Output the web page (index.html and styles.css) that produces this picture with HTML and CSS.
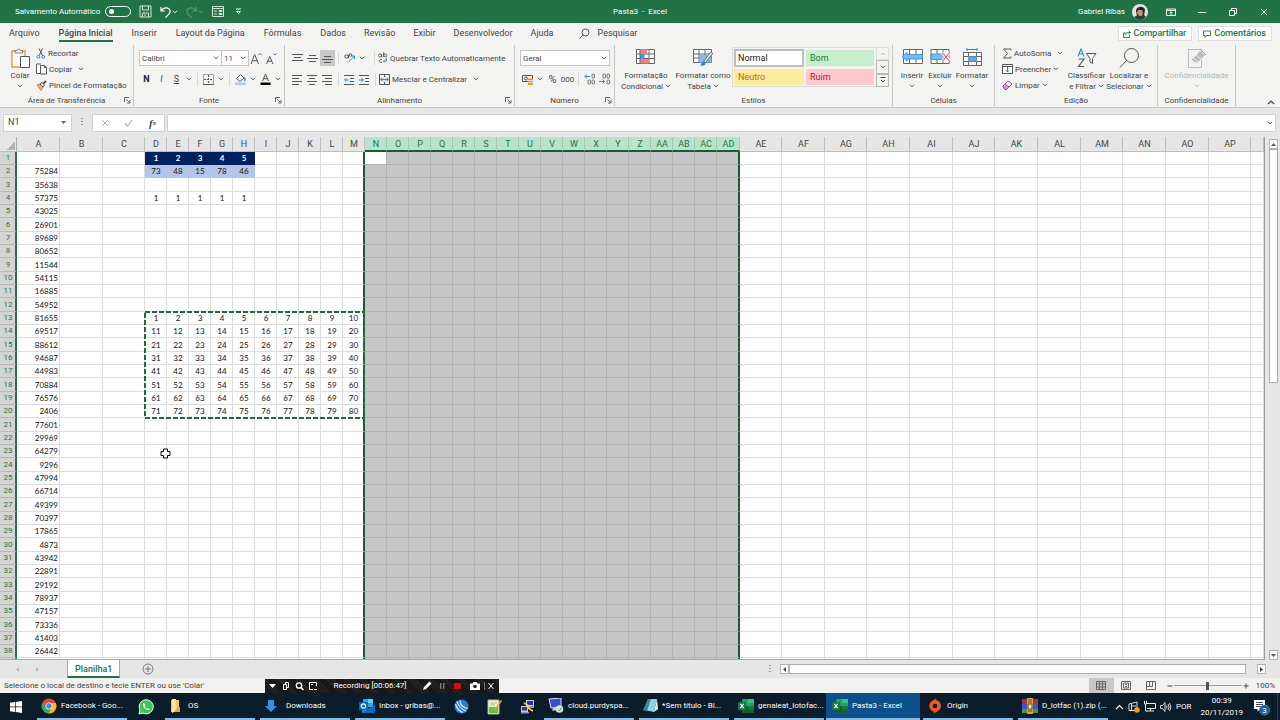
FILE: index.html
```html
<!DOCTYPE html>
<html lang="pt-BR">
<head>
<meta charset="utf-8">
<title>Pasta3 - Excel</title>
<link rel="stylesheet" href="styles.css">
</head>
<body>
<svg class="defs" aria-hidden="true">
  <symbol id="chev" viewBox="0 0 6 4"><path d="M1 .8l2 2 2-2" fill="none" stroke="currentColor" stroke-width="1"/></symbol>
  <symbol id="launch" viewBox="0 0 7 7"><path d="M.5 5V.5H5M2.500 2.500l3 3M6 3v3H3" fill="none" stroke="#555" stroke-width=".9"/></symbol>
  <symbol id="excel" viewBox="0 0 16 14"><rect x="4" y="0" width="12" height="14" rx="1" fill="#21a366"/><path d="M10 0h5a1 1 0 0 1 1 1v3h-6z" fill="#33c481"/><path d="M4 7h12v6a1 1 0 0 1-1 1H5a1 1 0 0 1-1-1z" fill="#185c37"/><path d="M10 7h6v3.500h-6z" fill="#107c41"/><rect y="3" width="8" height="8" rx=".7" fill="#107c41"/><path d="M2.300 4.800l3.400 4.400M5.700 4.800L2.300 9.200" stroke="#fff" stroke-width="1.200"/></symbol>
</svg>

<header class="titlebar">
  <div class="quick">
    <label class="autosave">Salvamento Automático <input type="checkbox" class="switch"></label>
    <button class="qb" aria-label="Salvar"><svg width="13" height="13" viewBox="0 0 13 13" fill="none" stroke="#d5e8dc"><path d="M1 1h11v11H1zM3.500 1v4h6V1M3.500 12V8h6v4M5 10h2"/></svg></button>
    <button class="qb" aria-label="Desfazer"><svg width="11" height="12" viewBox="0 0 11 12" fill="none" stroke="#fff" stroke-width="1.200"><path d="M1 1v4h4M1.300 4.700C3.500 1.500 7 1 9 3s1 4-.5 5.500L5.500 11.500"/></svg><svg width="6" height="4"><use href="#chev"/></svg></button>
    <button class="qb faded" aria-label="Refazer"><svg width="11" height="12" viewBox="0 0 11 12" fill="none" stroke="#fff" stroke-width="1.200"><path d="M10 1v4H6M9.700 4.700C7.500 1.500 4 1 2 3s-1 4 .5 5.500l3 3"/></svg><svg width="6" height="4"><use href="#chev"/></svg></button>
    <button class="qb" aria-label="Formulário"><svg width="12" height="11" viewBox="0 0 12 11" fill="none" stroke="#d5e8dc"><path d="M.5.5h11v10H.5zM.5 2.500h11M2 5h3M2 8h3M7 4.500h3v1H7zM7 7.500h3v1H7z"/></svg></button>
    <button class="qb more" aria-label="Personalizar"><svg width="7" height="7" viewBox="0 0 7 7"><path d="M1 1h5M1.500 3.500l2 2 2-2z" fill="none" stroke="#fff"/></svg></button>
  </div>
  <h1 class="doc">Pasta3 &nbsp;-&nbsp; Excel</h1>
  <div class="account">
    <span>Gabriel Ribas</span>
    <svg width="16" height="16" viewBox="0 0 16 16"><circle cx="8" cy="8" r="8" fill="#dfe5e2"/><path d="M4 7c0-5 8-6 9-1l-1 6-3 3-4-3z" fill="#2d2523"/><path d="M6 6h4l1 3-1 3H7L5 9z" fill="#c98f78"/><path d="M2 13l4-2 3 2 3-2 2 2c-3 4-9 4-12 0z" fill="#343c40"/></svg>
    <button class="wb" aria-label="Opções da faixa"><svg width="10" height="8" viewBox="0 0 10 8" fill="none" stroke="#fff" stroke-width=".9"><path d="M.5 1h9v6.500h-9zM.5 2.500h9M5 7V4M3.500 5.200L5 3.800l1.500 1.400"/></svg></button>
    <button class="wb" aria-label="Minimizar"><svg width="8" height="8"><path d="M0 4.500h8" stroke="#fff"/></svg></button>
    <button class="wb" aria-label="Restaurar"><svg width="8" height="8" viewBox="0 0 8 8" fill="none" stroke="#fff"><path d="M.5 2.500h5v5h-5zM2.500 2V.5h5v5H6"/></svg></button>
    <button class="wb" aria-label="Fechar"><svg width="8" height="8"><path d="M1 1l6 6M7 1L1 7" stroke="#fff"/></svg></button>
  </div>
</header>

<nav class="tabs">
  <a href="#">Arquivo</a><a href="#" class="current">Página Inicial</a><a href="#">Inserir</a><a href="#">Layout da Página</a><a href="#">Fórmulas</a><a href="#">Dados</a><a href="#">Revisão</a><a href="#">Exibir</a><a href="#">Desenvolvedor</a><a href="#">Ajuda</a>
  <button class="search"><svg width="11" height="11" viewBox="0 0 11 11" fill="none" stroke="#555"><circle cx="6.500" cy="4.500" r="3.500"/><path d="M4 7L.5 10.500"/></svg>Pesquisar</button>
  <button class="share"><svg width="8" height="8" viewBox="0 0 8 8" fill="none" stroke="#217346" stroke-width=".9"><path d="M3 3H.5v4.500h6V5M2.500 5c0-2 1.500-2.500 4.500-2.500M5.500.8l2 1.700-2 1.700"/></svg>Compartilhar</button>
  <button class="share"><svg width="8" height="8" viewBox="0 0 8 8" fill="none" stroke="#217346" stroke-width=".9"><path d="M.5 1h7v4.500H3.500L2 7.500v-2H.5z"/></svg>Comentários</button>
</nav>

<section class="ribbon">
  <div class="group g-clip">
    <div class="body">
      <button class="big paste"><svg width="19" height="20" viewBox="0 0 19 20"><path d="M1 3h13v16H1z" fill="#fff" stroke="#e8972f" stroke-width="1.400"/><path d="M4 5V2.500h2a1.800 1.800 0 0 1 3.500 0h2V5z" fill="#f3f3f1" stroke="#666" stroke-width=".8"/><path d="M9.500 8.500h9v11h-9z" fill="#fff" stroke="#555"/></svg><span>Colar</span><svg width="6" height="4"><use href="#chev"/></svg></button>
      <div class="stack">
        <button><svg width="10" height="11" viewBox="0 0 10 11" fill="none"><path d="M3 .5l3.500 7M6.500.5L3.200 7.500" stroke="#555"/><circle cx="2.300" cy="8.800" r="1.400" stroke="#2b88d8"/><circle cx="7.200" cy="8.800" r="1.400" stroke="#2b88d8"/></svg>Recortar</button>
        <button><svg width="11" height="12" viewBox="0 0 11 12" fill="#fff" stroke="#555"><path d="M4 10.500H.5V1H5"/><path d="M4.500 2.500h4l2 2v6.500h-6zM8.500 2.500v2h2"/></svg>Copiar <svg class="far" width="6" height="4"><use href="#chev"/></svg></button>
        <button><svg width="11" height="11" viewBox="0 0 11 11"><path d="M1 5l3-1 3 3-2 3.500z" fill="#f0b35a" stroke="#d98324"/><path d="M4 4l2-1.500L8.500 5 7 7z" fill="#fff" stroke="#555"/><path d="M7 4l3-3" stroke="#555" stroke-width="1.800"/></svg>Pincel de Formatação</button>
      </div>
    </div>
    <footer>Área de Transferência<svg width="7" height="7"><use href="#launch"/></svg></footer>
  </div>

  <div class="group g-font">
    <div class="body rows">
      <div class="row">
        <label class="combo c-font"><select aria-label="Fonte"><option>Calibri</option></select><svg width="6" height="4"><use href="#chev"/></svg></label>
        <label class="combo c-size"><select aria-label="Tamanho"><option>11</option></select><svg width="6" height="4"><use href="#chev"/></svg></label>
        <button class="ib" aria-label="Aumentar fonte"><svg width="13" height="13" viewBox="0 0 13 13" fill="none"><path d="M1 12L4.700 2.500 8.500 12M2.300 8.700h5" stroke="#555"/><path d="M8.500 3.200l1.700-2 1.700 2" stroke="#2b88d8"/></svg></button>
        <button class="ib" aria-label="Diminuir fonte"><svg width="13" height="13" viewBox="0 0 13 13" fill="none"><path d="M1.500 12l3.200-7.500L8 12M2.700 9.300h4" stroke="#555"/><path d="M8.500 1.500l1.500 1.700 1.500-1.700" stroke="#2b88d8"/></svg></button>
      </div>
      <div class="row marks">
        <button class="ib"><b>N</b></button><button class="ib"><i>I</i></button><button class="ib"><u>S</u></button><svg class="cv" width="6" height="4"><use href="#chev"/></svg><i class="vr"></i>
        <button class="ib" aria-label="Bordas"><svg width="11" height="11" viewBox="0 0 11 11" fill="none" stroke="#555"><path d="M.5.5h10v10H.5z" stroke-dasharray="1 1"/><path d="M5.500 1v9M1 5.500h9" stroke-dasharray="2 1"/><path d="M0 10.500h11"/></svg></button><svg class="cv" width="6" height="4"><use href="#chev"/></svg><i class="vr"></i>
        <button class="ib" aria-label="Cor de preenchimento"><svg width="11" height="12" viewBox="0 0 11 12"><path d="M1.500 5.500l4-4 3.500 3.500-4 3.500z" fill="#fff" stroke="#555"/><path d="M8.500 4c2 1 1.500 3 1 4" stroke="#2b88d8" stroke-width="1.300" fill="none"/><path d="M0 9.500h11V12H0z" fill="#b4c6e7"/></svg></button><svg class="cv" width="6" height="4"><use href="#chev"/></svg>
        <button class="ib" aria-label="Cor da fonte"><svg width="11" height="12" viewBox="0 0 11 12"><path d="M2.500 8l3-7 3 7M3.500 5.700h4" fill="none" stroke="#555"/><path d="M.5 9.500h10V12H.5z" fill="#000"/></svg></button><svg class="cv" width="6" height="4"><use href="#chev"/></svg>
      </div>
    </div>
    <footer>Fonte<svg width="7" height="7"><use href="#launch"/></svg></footer>
  </div>

  <div class="group g-align">
    <div class="body rows">
      <div class="row">
        <button class="ib" aria-label="Em cima"><svg width="11" height="11" stroke="#555"><path d="M0 1.500h11M2 4.500h7M0 7.500h11"/></svg></button>
        <button class="ib" aria-label="No meio"><svg width="11" height="11" stroke="#555"><path d="M2 2.500h7M0 5.500h11M2 8.500h7"/></svg></button>
        <button class="ib on" aria-label="Embaixo"><svg width="11" height="11" stroke="#555"><path d="M2 3.500h7M0 6.500h11M2 9.500h7"/></svg></button><i class="vr"></i>
        <button class="ib" aria-label="Orientação"><svg width="12" height="12" viewBox="0 0 12 12" fill="none"><circle cx="2.500" cy="4.500" r="1.700" stroke="#555"/><path d="M4.500 3v3" stroke="#555"/><circle cx="6.500" cy="3" r="1.300" stroke="#555"/><path d="M4 10.500l6.500-6.500M7.500 4h3v3" stroke="#2b88d8"/></svg></button><svg class="cv" width="6" height="4"><use href="#chev"/></svg><i class="vr wide"></i>
        <button class="tb"><svg width="10" height="12" viewBox="0 0 10 12" fill="none" stroke="#555" stroke-width=".9"><circle cx="2" cy="3.500" r="1.500"/><path d="M3.700 2v3.300M5.700 0v5"/><circle cx="7.300" cy="3.500" r="1.500"/><path d="M4 7.500c-3-1-4 3.500 0 2.800"/><path d="M8.500 6v3h-3M7 7.500L5.500 9 7 10.500" stroke="#2b88d8"/></svg>Quebrar Texto Automaticamente</button>
      </div>
      <div class="row">
        <button class="ib" aria-label="Esquerda"><svg width="11" height="11" stroke="#555"><path d="M0 1.500h10M0 4.500h7M0 7.500h10M0 10.500h7"/></svg></button>
        <button class="ib" aria-label="Centro"><svg width="11" height="11" stroke="#555"><path d="M0 1.500h10M2 4.500h6M0 7.500h10M2 10.500h6"/></svg></button>
        <button class="ib" aria-label="Direita"><svg width="11" height="11" stroke="#555"><path d="M0 1.500h10M3 4.500h7M0 7.500h10M3 10.500h7"/></svg></button><i class="vr"></i>
        <button class="ib" aria-label="Diminuir recuo"><svg width="11" height="11" fill="none" stroke="#555"><path d="M0 1.500h10M6 4.500h4M6 7.500h4M0 10.500h10"/><path d="M5 6H.8M2.500 4.200L.7 6l1.800 1.800" stroke="#2b88d8"/></svg></button>
        <button class="ib" aria-label="Aumentar recuo"><svg width="11" height="11" fill="none" stroke="#555"><path d="M0 1.500h10M6 4.500h4M6 7.500h4M0 10.500h10"/><path d="M0 6h4.500M2.700 4.200L4.500 6 2.700 7.800" stroke="#2b88d8"/></svg></button><i class="vr"></i>
        <button class="tb"><svg width="11" height="11" viewBox="0 0 11 11" fill="none" stroke="#555"><path d="M.5.5h10v10H.5zM5.500.5v3M5.500 7.500v3"/><path d="M1 3h9v5H1z" fill="#cfe6f7" stroke="none"/><path d="M1.500 5.500h8M3.200 4L1.700 5.500 3.200 7M7.800 4l1.500 1.500L7.800 7" stroke="#2b88d8"/></svg>Mesclar e Centralizar <svg class="far" width="6" height="4"><use href="#chev"/></svg></button>
      </div>
    </div>
    <footer>Alinhamento<svg width="7" height="7"><use href="#launch"/></svg></footer>
  </div>

  <div class="group g-num">
    <div class="body rows">
      <div class="row"><label class="combo c-num"><select aria-label="Formato"><option>Geral</option></select><svg width="6" height="4"><use href="#chev"/></svg></label></div>
      <div class="row">
        <button class="ib" aria-label="Moeda"><svg width="12" height="11" viewBox="0 0 12 11"><path d="M.5 1.500h10v6H.5z" fill="none" stroke="#555"/><circle cx="4" cy="4.500" r="1.500" fill="none" stroke="#555"/><path d="M6 4.500h5V11H6z" fill="#ee8f2c"/><path d="M6 6.500h5M6 8.500h5" stroke="#fff" stroke-width=".7"/></svg></button><svg class="cv" width="6" height="4"><use href="#chev"/></svg>
        <button class="ib pct">%</button><button class="ib mil">000</button><i class="vr"></i>
        <button class="ib dec" aria-label="Aumentar casas"><svg width="12" height="12" fill="none"><path d="M1 3.500h5M3 1.500L1 3.500l2 2" stroke="#2b88d8"/><g stroke="#666" stroke-width=".9"><rect x="8" y="1" width="2.500" height="4" rx="1"/><rect x="4" y="7" width="2.500" height="4" rx="1"/><rect x="8" y="7" width="2.500" height="4" rx="1"/></g></svg></button>
        <button class="ib dec" aria-label="Diminuir casas"><svg width="12" height="12" fill="none"><path d="M0 8.500h5.500M3.500 6.500l2 2-2 2" stroke="#2b88d8"/><g stroke="#666" stroke-width=".9"><rect x="4" y="1" width="2.500" height="4" rx="1"/><rect x="8" y="1" width="2.500" height="4" rx="1"/><rect x="8" y="7" width="2.500" height="4" rx="1"/></g></svg></button>
      </div>
    </div>
    <footer>Número<svg width="7" height="7"><use href="#launch"/></svg></footer>
  </div>

  <div class="group g-style">
    <div class="body">
      <button class="big w-cond"><svg width="20" height="18" viewBox="0 0 20 18"><path d="M.5 1.500h18v14H.5zM.5 6h18M.5 10.500h18M13 1.500v14" fill="#fff" stroke="#666"/><path d="M4 1h7v5H4zM4 11h9v4.500H4z" fill="#f47b80"/><path d="M4 6h4.500v5H4z" fill="#3f9be0"/><path d="M4 1v15" stroke="#666"/></svg><span>Formatação<br>Condicional <svg width="6" height="4"><use href="#chev"/></svg></span></button>
      <button class="big w-table"><svg width="20" height="18" viewBox="0 0 20 18"><path d="M.5 1.500h18v13H.5zM.5 6h18M.5 10h18M6 1.500v13M12 1.500v13" fill="#fff" stroke="#666"/><path d="M6.500 6.500h12v8h-12z" fill="#79bdf0"/><path d="M19 4.500l-7.500 9.500" stroke="#666" stroke-width="3"/><path d="M18.600 5l-6.800 8.600" stroke="#fff" stroke-width="1.400"/><path d="M6 17.500c3 0 2-3 4-4s4 3 1 4z" fill="#2b88d8"/></svg><span>Formatar como<br>Tabela <svg width="6" height="4"><use href="#chev"/></svg></span></button>
      <div class="gallery">
        <button class="st normal">Normal</button><button class="st bom">Bom</button><button class="st neutro">Neutro</button><button class="st ruim">Ruim</button>
        <div class="gscroll"><button class="off" aria-label="Acima"><svg width="6" height="4" viewBox="0 0 6 4"><path d="M1 3l2-2 2 2" fill="none" stroke="currentColor"/></svg></button><button aria-label="Abaixo"><svg width="6" height="4"><use href="#chev"/></svg></button><button aria-label="Mais"><svg width="6" height="6" viewBox="0 0 6 6"><path d="M.5.5h5M1 3l2 2 2-2" fill="none" stroke="currentColor"/></svg></button></div>
      </div>
    </div>
    <footer>Estilos</footer>
  </div>

  <div class="group g-cells">
    <div class="body">
      <button class="big w-ins"><svg width="21" height="18" viewBox="0 0 21 18"><path d="M1.500 1.500h19v14h-19zM7.500 1.500v14M14 1.500v14" fill="#fff" stroke="#666"/><path d="M0 8.500l5-4v2h15.500v4.500H5v2z" fill="#79bdf0" stroke="#2b88d8" stroke-width=".8"/></svg><span>Inserir</span><svg width="6" height="4"><use href="#chev"/></svg></button>
      <button class="big w-del"><svg width="21" height="18" viewBox="0 0 21 18"><path d="M1 1.500h18v14H1zM7 1.500v14M13 1.500v14" fill="#fff" stroke="#666"/><path d="M1 6h11l3 3-3 2.500H1z" fill="#79bdf0" stroke="#2b88d8" stroke-width=".8"/><path d="M12.500 5l7 8M19.500 5l-7 8" stroke="#fff" stroke-width="3"/><path d="M12.500 5l7 8M19.500 5l-7 8" stroke="#e0474c" stroke-width="1.100"/></svg><span>Excluir</span><svg width="6" height="4"><use href="#chev"/></svg></button>
      <button class="big w-fmt"><svg width="21" height="20" viewBox="0 0 21 20"><path d="M1.500 4.500h18v13h-18zM1.500 8.500h18M1.500 13.500h18M6.500 4.500v13M14.500 4.500v13" fill="#fff" stroke="#666"/><path d="M6 8.500h9v5H6z" fill="#5aa9e6"/><path d="M5 1.500h10M5 0v3M15 0v3" stroke="#2b88d8"/></svg><span>Formatar</span><svg width="6" height="4"><use href="#chev"/></svg></button>
    </div>
    <footer>Células</footer>
  </div>

  <div class="group g-edit">
    <div class="body">
      <div class="stack">
        <button><svg width="10" height="11" viewBox="0 0 10 11"><path d="M9 2.500V1H1.500l4 4.500-4 4.500H9V8.500" fill="none" stroke="#555"/></svg>AutoSoma <svg class="far" width="6" height="4"><use href="#chev"/></svg></button>
        <button><svg width="11" height="10" viewBox="0 0 11 10"><path d="M.5.5h10v9H.5zM.5 2.500h10" fill="#fff" stroke="#555"/><path d="M5.500 3v5M3.500 6l2 2 2-2" fill="none" stroke="#2b88d8"/></svg>Preencher <svg width="6" height="4"><use href="#chev"/></svg></button>
        <button><svg width="11" height="10" viewBox="0 0 11 10"><path d="M1 6l5-5 4 3-5.500 5.500H3z" fill="#fff" stroke="#a349b5"/><path d="M1 6l2-2 4 3-2.500 2.500H3z" fill="#d59be0" stroke="#a349b5"/></svg>Limpar <svg width="6" height="4"><use href="#chev"/></svg></button>
      </div>
      <button class="big w-sort"><svg width="20" height="20" viewBox="0 0 20 20" fill="none"><path d="M1 8.500L4 1l3 7.500M2 6h4" stroke="#2b88d8" stroke-width="1.100"/><path d="M1.500 11h5.500L1.500 18.500H7" stroke="#555" stroke-width="1.100"/><path d="M9.500 5.500h9.500l-3.500 5v5l-2.500-1.500v-3.500z" fill="#fff" stroke="#555"/></svg><span>Classificar<br>e Filtrar <svg width="6" height="4"><use href="#chev"/></svg></span></button>
      <button class="big w-find"><svg width="20" height="20" viewBox="0 0 20 20" fill="none" stroke="#555"><circle cx="12.500" cy="7.500" r="7"/><path d="M7.500 12.500L1 19.500"/></svg><span>Localizar e<br>Selecionar <svg width="6" height="4"><use href="#chev"/></svg></span></button>
    </div>
    <footer>Edição</footer>
  </div>

  <div class="group g-conf">
    <div class="body">
      <button class="big dim" disabled><svg width="20" height="20" viewBox="0 0 20 20"><path d="M1.500 1.500h13v18h-13z" fill="none" stroke="#bbb"/><path d="M5 12l8-9 5 4-8 8z" fill="#bcbcbc"/><path d="M13 1l6 6M5 12l2-2M7 14l2-2" stroke="#999"/><path d="M6 10l6 5M9 7l6 5" stroke="#eee"/></svg><span>Confidencialidade</span><svg width="6" height="4"><use href="#chev"/></svg></button>
    </div>
    <footer>Confidencialidade</footer>
  </div>
  <button class="collapse" aria-label="Recolher"><svg width="8" height="5"><path d="M1 4l3-3 3 3" fill="none" stroke="#444" stroke-width="1.100"/></svg></button>
</section>

<div class="formula">
  <div class="namebox"><input value="N1" aria-label="Caixa de nome"><svg width="6" height="4"><path d="M0 0h5L2.500 3z" fill="#666"/></svg></div>
  <span class="grip"></span>
  <div class="fx">
    <button aria-label="Cancelar"><svg width="8" height="8"><path d="M1 1l6 6M7 1L1 7" stroke="#b5b5b5"/></svg></button>
    <button aria-label="Inserir"><svg width="9" height="8"><path d="M1 4.500L3.500 7 8 1" fill="none" stroke="#b5b5b5" stroke-width="1.200"/></svg></button>
    <button aria-label="Função" class="fn">f<small>x</small></button>
  </div>
  <div class="fbar"><input aria-label="Barra de fórmulas"><svg width="6" height="4"><use href="#chev"/></svg></div>
</div>

<main class="work">
  <div class="sheet">
    <table id="grid"></table>
    <svg class="cursor" width="11" height="11" viewBox="0 0 11 11"><path d="M3.500 1h4v2.500H10v4H7.500V10h-4V7.500H1v-4h2.500z" fill="#fff" stroke="#000"/></svg>
  </div>
  <div class="vscroll">
    <button aria-label="Acima"><svg width="5" height="3"><path d="M0 3h5L2.500 0z" fill="#555"/></svg></button>
    <div class="vthumb"></div>
    <button aria-label="Abaixo"><svg width="5" height="3"><path d="M0 0h5L2.500 3z" fill="#555"/></svg></button>
  </div>
</main>

<div class="strip">
  <button class="nav" aria-label="Anterior"><svg width="4" height="5"><path d="M3 0v5L0 2.500z" fill="#bbb"/></svg></button>
  <button class="nav" aria-label="Próxima"><svg width="4" height="5"><path d="M0 0v5l3-2.500z" fill="#bbb"/></svg></button>
  <button class="stab">Planilha1</button>
  <button class="add" aria-label="Nova planilha"><svg width="12" height="12" fill="none" stroke="#777"><circle cx="6" cy="6" r="5"/><path d="M3 6h6M6 3v6"/></svg></button>
  <span class="grip"></span>
  <div class="hscroll">
    <button aria-label="Esquerda"><svg width="3" height="5"><path d="M3 0v5L0 2.500z" fill="#444"/></svg></button>
    <div class="hthumb"></div>
    <button aria-label="Direita"><svg width="3" height="5"><path d="M0 0v5l3-2.500z" fill="#444"/></svg></button>
  </div>
</div>

<div class="status">
  <span class="msg">Selecione o local de destino e tecle ENTER ou use 'Colar'</span>
  <div class="recorder">
    <svg width="48" height="10" viewBox="0 0 48 10" fill="none" stroke="#fff"><path d="M0 3h7L3.500 7z" fill="#fff" stroke="none"/><path d="M14.500 3.500h3v5h-3zM16.500 3V1.500h3v5H18"/><circle cx="30" cy="4.500" r="2.700" stroke-width="1.300"/><path d="M32 6.500l2.500 2.500" stroke-width="1.500"/><path d="M44 8.500h-3.500v-7h7V5M42 3.500h2M45 8.500h3" /></svg>
    <span>Recording [00:06:47]</span>
    <svg width="72" height="10" viewBox="0 0 72 10"><path d="M0 9l1-3 5.500-5.500 2 2L3 8z" fill="#fff"/><path d="M17 2h1.500v6H17zM20 2h1.500v6H20z" fill="#777"/><path d="M31 2h7v6h-7z" fill="#d40d12"/><path d="M47 2.500h2.500L50.500 1h3l1 1.500H57V9H47z" fill="#fff"/><circle cx="52" cy="5.500" r="1.800" fill="#222"/><path d="M61.500 1v8" stroke="#777"/><path d="M65.500 2l5 6M70.500 2l-5 6" stroke="#fff"/></svg>
  </div>
  <div class="views">
    <button class="on" aria-label="Normal"><svg width="10" height="9" fill="none" stroke="#666"><path d="M.5.5h9v8h-9zM.5 3h9M.5 6h9M3.500.5v8M6.500.5v8"/></svg></button>
    <button aria-label="Layout"><svg width="10" height="9" fill="none" stroke="#666"><path d="M.5.5h9v8h-9zM2.500 2h5v5h-5zM4 3.500h2M4 5.500h2"/></svg></button>
    <button aria-label="Quebras"><svg width="10" height="9" fill="none" stroke="#666"><path d="M.5.5h9v8h-9zM3.500.5v5h3v-5M.5 5.500h3"/></svg></button>
  </div>
  <div class="zoom"><button aria-label="Menos"><svg width="6" height="6"><path d="M.5 3h5" stroke="#444"/></svg></button><input type="range" value="50" aria-label="Zoom"><button aria-label="Mais"><svg width="6" height="6"><path d="M.5 3h5M3 .5v5" stroke="#444"/></svg></button><span>100%</span></div>
</div>

<footer class="taskbar">
  <button class="ico start" aria-label="Iniciar"><svg width="12" height="12" fill="#fff"><path d="M0 1.700l5-.7v4.600H0zM5.700.9L12 0v5.600H5.700zM0 6.300h5V11l-5-.7zM5.700 6.300H12V12l-6.300-.9z"/></svg></button>
  <button class="task"><svg width="16" height="16" viewBox="0 0 16 16"><circle cx="8" cy="8" r="7.500" fill="#ea4335"/><path d="M1.500 4.300a7.500 7.500 0 0 0 6 11.200L11 9.500 5 9.700z" fill="#34a853"/><path d="M7.500 15.500a7.500 7.500 0 0 0 7.300-10.500H8l3 4.500z" fill="#fbbc05"/><circle cx="8" cy="8" r="3.500" fill="#fff"/><circle cx="8" cy="8" r="2.700" fill="#4285f4"/></svg>Facebook - Goo...</button>
  <button class="ico wa" aria-label="WhatsApp"><svg width="16" height="16" viewBox="0 0 16 16"><path d="M1 15l1-4A7 7 0 1 1 5 14z" fill="#3fc351" stroke="#fff"/><path d="M5.300 4.300c-1 1-.4 3 1.500 4.900s4 2.500 5 1.400l-1.700-1.500-1.100.7C8 9.300 7 8.300 6.500 7.200l.7-1-1-2z" fill="#fff"/></svg></button>
  <button class="task folder"><svg width="11" height="14" viewBox="0 0 11 14"><path d="M1 1h8v12H1z" fill="#f5c95a"/><path d="M2 0h4v12l-4 2z" fill="#ffe39a"/><path d="M8 8h2v5H4z" fill="#e2ae3d"/></svg>OS</button>
  <button class="task down"><svg width="12" height="14" viewBox="0 0 12 14"><path d="M3 1h6v6h3l-6 6-6-6h3z" fill="#3a8fe8"/></svg>Downloads</button>
  <button class="task"><svg width="16" height="14" viewBox="0 0 16 14"><path d="M4 0h10v8H4z" fill="#28a8ea"/><path d="M9 0h5v4H9z" fill="#50d9ff"/><path d="M3 6l6.500 4L16 6v8H3z" fill="#1490df"/><path d="M3 14L16 6v8z" fill="#0f6cbd"/><rect y="3" width="9" height="8" fill="#0364b8"/><circle cx="4.500" cy="7" r="2.200" fill="none" stroke="#fff" stroke-width="1.200"/></svg>Inbox - gribas@...</button>
  <button class="ico mid" aria-label="Navegação"><svg width="15" height="15" viewBox="0 0 15 15"><circle cx="7.500" cy="7.500" r="7" fill="#3179cd"/><path d="M3 2c1 5 4 8 9 10M6 1.500c0 4 3 7 7.500 8M1.500 5c1 4 4 7 7.500 8.500" stroke="#d4e9fb" fill="none" stroke-width="1.200"/></svg></button>
  <button class="ico mid" aria-label="Editor"><svg width="15" height="16" viewBox="0 0 15 16"><path d="M1 1h11v14H1z" fill="#f2f6d8" stroke="#a9b77c"/><path d="M2 8h9v6H2z" fill="#6abf3c"/><path d="M3 4h7M3 6h5" stroke="#aaa"/><path d="M14 1l-6 8-1 2 2-1 6-8z" fill="#e6a834"/></svg></button>
  <button class="ico mid" aria-label="Terminal"><svg width="15" height="15" viewBox="0 0 15 15"><path d="M6 1h8v6H6zM1 7h7v6H1z" fill="#c8cbd0"/><path d="M7 2h6v4H7zM2 8h5v3.500H2z" fill="#2635b8"/><path d="M9 7h5v2H9zM1 13h8v1.500H1z" fill="#999"/><path d="M4 4l5 3-1 2 5 3" stroke="#f1d62a" fill="none" stroke-width="1.600"/></svg></button>
  <button class="task"><svg width="16" height="15" viewBox="0 0 16 15"><path d="M1 1l12-1v9L3 10z" fill="#3550cf" stroke="#dce2f1"/><path d="M5 10l5-.5 1 3H4z" fill="#c9cfdd"/><circle cx="11.500" cy="11" r="3.800" fill="#dce7e0"/><path d="M10 11.500l1.500 1.500 2-3.500" stroke="#35a047" fill="none"/></svg>cloud.purdyspa...</button>
  <button class="task"><svg width="15" height="14" viewBox="0 0 15 14"><path d="M5 0h9l-3 13-10-2z" fill="#8fd2e6"/><path d="M5 0h3L4 12l-4-1z" fill="#43879b"/><path d="M11 13l3-13 1 10z" fill="#e6f4f7"/></svg>*Sem título - Bl...</button>
  <button class="task"><svg width="16" height="14"><use href="#excel"/></svg>genaleat_lotofac...</button>
  <button class="task active"><svg width="16" height="14"><use href="#excel"/></svg>Pasta3 - Excel</button>
  <button class="task origin"><svg width="14" height="16" viewBox="0 0 14 16"><path d="M9 0L7.500 2A6 6 0 0 1 10 13L5 16l1.500-2.200A6 6 0 0 1 4 3z" fill="#f05a22"/><circle cx="7" cy="8" r="5.500" fill="#f05a22"/><circle cx="7" cy="8" r="2.300" fill="#0b1c2a"/></svg>Origin</button>
  <button class="task"><svg width="16" height="16" viewBox="0 0 16 16"><path d="M0 1h16v5H0z" fill="#a8324a"/><path d="M0 6h16v5H0z" fill="#4a55b8"/><path d="M0 11h16v4H0z" fill="#3d9a48"/><path d="M5 0h6v16H5z" fill="#d7a039"/><path d="M6 6h4v5H6z" fill="#f4e4ba" stroke="#73501c"/><path d="M6 2h4M6 4h4M6 13h4" stroke="#73501c"/></svg>D_lotfac (1).zip (...</button>
  <div class="tray">
    <svg width="9" height="6"><path d="M1 5l3.500-3.500L8 5" fill="none" stroke="#fff" stroke-width="1.100"/></svg>
    <svg width="12" height="12" viewBox="0 0 12 12"><path d="M1 3l8-2v8.500H1zM3.500 3v6M4 5h4" fill="none" stroke="#ddd"/><circle cx="9" cy="9" r="2.800" fill="#f39a1e"/></svg>
    <svg width="12" height="11" viewBox="0 0 12 11" fill="none" stroke="#eee"><path d="M3 2.500h8.500v5H3M6.500 7.500v2M4 10h6M.5 0v3h2V0M1.500 3v7H4"/></svg>
    <svg width="12" height="10" viewBox="0 0 12 10" fill="none" stroke="#eee" stroke-width=".9"><path d="M.5 3.500h2l2.500-3v9l-2.500-3h-2zM6.500 3.500q1 1.500 0 3M8 2q2.200 3 0 6M9.500 1q3 4 0 8"/></svg>
    <span>POR</span>
    <time>00:39<br>20/11/2019</time>
    <svg class="bell" width="17" height="18" viewBox="0 0 17 18"><path d="M1 2h11v9H7l-2.500 2.500V11H1z" fill="#fff"/><path d="M3 4.500h7M3 6.500h7M3 8.500h5" stroke="#12202c" stroke-width=".8"/><circle cx="11.500" cy="12" r="5" fill="#1c5d92" stroke="#4d9bd3" stroke-width=".7"/><text x="11.500" y="15" text-anchor="middle">3</text></svg>
  </div>
</footer>
<script src="grid.js"></script>
</body>
</html>
```

FILE: styles.css
```css
* { box-sizing: border-box; }
body {
  margin: 0; height: 100vh; overflow: hidden;
  display: flex; flex-direction: column;
  font-family: Roboto, "Noto Sans", sans-serif; font-size: 8px; line-height: 11px;
  color: #444; background: #e6e6e6;
}
button, input, select { font: inherit; color: inherit; border: 0; padding: 0; margin: 0; background: none; }
button { display: flex; align-items: center; white-space: nowrap; }
svg { flex: none; display: block; }
a { color: inherit; text-decoration: none; }
.defs { position: absolute; width: 0; height: 0; }

/* title bar */
.titlebar { flex: none; height: 23px; display: grid; grid-template-columns: 1fr auto 1fr; align-items: center; background: #217346; color: #fff; }
.quick { display: flex; align-items: center; padding-left: 15px; gap: 8px; }
.autosave { display: flex; align-items: center; gap: 5px; white-space: nowrap; }
.switch { appearance: none; width: 26px; height: 11px; margin: 0; border: 1px solid #fff; border-radius: 6px; display: flex; align-items: center; padding-left: 3px; }
.switch::before { content: ""; width: 5px; height: 5px; border-radius: 50%; background: #fff; }
.qb { gap: 1px; }
.qb.more { margin-left: 3px; }
.faded { opacity: .25; }
.doc { margin: 0; font-size: 8px; font-weight: 400; }
.account { display: flex; align-items: center; justify-content: flex-end; gap: 7px; padding-right: 11px; }
.wb { width: 10px; justify-content: center; margin-left: 11px; }
.wb + .wb { margin-left: 14px; }

/* ribbon tabs */
.tabs { flex: none; height: 21px; display: flex; align-items: center; padding: 0 8px 0 9px; gap: 19px; background: #f3f3f1; font-size: 9px; white-space: nowrap; }
.current { font-weight: 500; position: relative; }
.current::after { content: ""; position: absolute; left: 0; right: 0; bottom: -3px; height: 2px; background: #217346; }
.tabs a:nth-child(n+7) { margin-left: -1px; }
.search { gap: 8px; margin: 0 auto 0 6px; }
.share { height: 15px; padding: 0 5px 0 4px; gap: 3px; margin-left: -13px; background: #fff; border: 1px solid #e1dfdd; color: #217346; font-weight: 500; }

/* ribbon */
.ribbon { flex: none; height: 64px; display: flex; padding: 1px 0; background: #f3f3f1; border-bottom: 1px solid #c8c8c8; }
.group { flex: none; display: flex; flex-direction: column; border-right: 1px solid #c6c6c4; }
.group .body { flex: 1; display: flex; align-items: flex-start; }
.group footer { display: flex; justify-content: center; height: 12px; line-height: 14px; position: relative; white-space: nowrap; }
.group footer svg { position: absolute; right: 2px; top: 3px; }
.g-clip { width: 134px; }
.g-font { width: 151px; }
.g-align { width: 230px; }
.g-num { width: 100px; }
.g-style { width: 278px; }
.g-cells { width: 102px; }
.g-edit { width: 163px; }
.g-conf { width: 78px; }
.big { flex-direction: column; height: 44px; margin-top: 3px; }
.big > svg:first-child { margin-bottom: auto; }
.big span { text-align: center; }
.big span svg { display: inline-block; vertical-align: 1px; }
.big > span + svg { margin: 3px 0 4px; }
.paste { width: 36px; margin-left: 2px; }
.stack { display: flex; flex-direction: column; margin-left: -2px; }
.stack button { height: 16px; gap: 2px; }
.stack .far, .tb .far { margin-left: 4px; }
.body.rows { flex-direction: column; padding: 5px 0 0 5px; gap: 5px; }
.row { display: flex; align-items: center; height: 16px; }
.ib { width: 15px; height: 16px; justify-content: center; font-size: 9px; }
.ib.on { background: #c9c9c7; }
.marks .ib b { color: #222; }
.cv { margin: 0 2px; }
.vr { width: 1px; height: 13px; background: #d6d6d4; margin: 0 3px; }
.vr.wide { margin: 0 3px 0 7px; }
.tb { gap: 2px; }
.combo { height: 16px; display: flex; align-items: center; background: #fff; border: 1px solid #c8c6c4; padding: 0 2px; }
.combo select { appearance: none; flex: 1; min-width: 0; }
.c-font { width: 83px; }
.c-size { width: 28px; margin: 0 0 0 -1px; }
.c-num { width: 90px; }
.ib.pct { font-size: 11px; }
.ib.mil { font-size: 8px; }
.w-cond { width: 62px; }
.w-table { width: 52px; }
.gallery { display: grid; grid-template-columns: 70px 68px 11px; grid-template-rows: 18px 16px; gap: 2px; margin: 2px 0 0 3px; border: 1px solid #dcdcda; padding: 1px; }
.st { padding-left: 4px; font-size: 9px; }
.normal { background: #fff; border: 2px solid #bdbdbd; color: #222; padding-left: 2px; }
.bom { background: #c6efce; color: #1d7a2b; margin: 1px 0; }
.neutro { background: #ffeb9c; color: #a8701a; }
.ruim { background: #ffc7ce; color: #a8202c; }
.gscroll { grid-column: 3; grid-row: 1 / 3; display: grid; grid-template-rows: 1fr 1fr 1fr; margin: -2px -2px -2px 0; }
.gscroll button { justify-content: center; border: 1px solid #b8b8b6; }
.gscroll .off { color: #bbb; border-color: #dcdcda; }
.w-ins { width: 28px; margin-left: 5px; }
.w-del { width: 28px; }
.w-fmt { width: 36px; }
.g-edit .stack { width: 66px; margin-left: 7px; }
.w-sort { width: 37px; }
.w-find { width: 48px; }
.dim { width: 77px; color: #b4b4b4; }
.collapse { margin: auto 5px 0 auto; height: 8px; }

/* formula bar */
.formula { flex: none; height: 29px; display: flex; align-items: center; padding: 0 4px 0 3px; font-size: 9px; }
.namebox, .fx, .fbar { height: 18px; display: flex; align-items: center; background: #fff; border: 1px solid #d0d0d0; }
.namebox { width: 69px; padding: 0 4px; }
.namebox input { flex: 1; min-width: 0; }
.grip { width: 2px; height: 9px; margin: 0 9px; background: repeating-linear-gradient(#999 0 1px, transparent 1px 3px); }
.fx { width: 73px; justify-content: space-around; }
.fn { font: italic bold 11px "Liberation Serif", serif; }
.fn small { font-size: 7px; }
.fbar { flex: 1; margin-left: 2px; padding-right: 2px; }
.fbar input { flex: 1; min-width: 0; }

/* sheet */
.work { flex: 1; min-height: 0; display: flex; }
.sheet { flex: 1; min-width: 0; overflow: hidden; position: relative; background: #fff; border-bottom: 1px solid #ababab; border-right: 1px solid #999; }
#grid { width: 100%; table-layout: fixed; border-collapse: separate; border-spacing: 0; font-family: Lato, sans-serif; color: #111; }
#grid th, #grid td { height: 13px; padding: 0 0 0 1px; line-height: 12px; font-size: 8px; text-align: center; font-weight: 400; border-right: 1px solid #dcdcdc; border-bottom: 1px solid #dcdcdc; white-space: nowrap; }
#grid tr.tall th, #grid tr.tall td { height: 14px; }
#grid thead th { height: 15px; background: #e6e6e6; color: #444; border-color: #bdbdbd; font-family: Roboto, sans-serif; font-size: 9px; }
#grid thead th.sel { background: #b9e3ca; color: #217346; border-right-color: #9ccbb0; border-bottom: 2px solid #185c37; }
#grid tbody th { background: #d4d4d4; color: #217346; font-family: Roboto, sans-serif; border-right: 2px solid #217346; border-bottom-color: #b9b9b9; }
#grid thead th:first-child { border-right-color: #ababab; background: linear-gradient(135deg, transparent 50%, #b3b3b3 50%) 6px 4px / 9px 9px no-repeat #e6e6e6; }
#grid td.num { text-align: right; padding-right: 1px; }
#grid td.sel { background: #c6c6c6; border-color: #b3b3b3; }
#grid td.active { background: #fff; }
#grid td.edge, #grid td.last { border-right: 2px solid #185c37; }
#grid td.head { background: #002060; color: #fff; font-weight: 700; border-color: #002060; }
#grid td.pick { background: #b4c6e7; border-color: #b4c6e7; }
#grid td.anchor { position: relative; }
.ants { position: absolute; left: -1px; top: -1px; pointer-events: none; }
.cursor { position: absolute; left: 160px; top: 311px; }
.w43 { width: 43px; }
.w42 { width: 42px; }
.w22 { width: 22px; }
.w17 { width: 17px; }
.w23 { width: 23px; }
.vscroll { flex: none; width: 15px; padding: 2px 3px 0 4px; display: flex; flex-direction: column; }
.vscroll button, .hscroll button { justify-content: center; background: #fff; border: 1px solid #b0b0b0; width: 9px; height: 10px; }
.vthumb { height: 45%; background: #fff; border: 1px solid #ababab; margin-bottom: auto; width: 9px; }

/* sheet tabs */
.strip { flex: none; height: 18px; display: flex; align-items: center; }
.nav { margin-left: 16px; }
.stab { height: 18px; margin: 0 22px 0 27px; padding: 2px 7px 0; background: #fff; border: solid #ababab; border-width: 0 1px; border-bottom: 2px solid #217346; color: #217346; font-size: 9px; font-weight: 500; align-self: flex-start; }
.strip .grip { margin: 0 9px 0 auto; }
.hscroll { flex: 0 0 38%; display: flex; align-items: center; margin-right: 14px; }
.hthumb { flex: 1; height: 10px; background: #fff; border: 1px solid #ababab; margin-right: 11px; }

/* status bar */
.status { flex: none; height: 15px; display: flex; align-items: center; background: #f1f1ef; }
.msg { flex: 0 0 265px; padding-left: 4px; white-space: nowrap; }
.recorder { height: 14px; width: 234px; display: flex; align-items: center; padding: 0 4px; justify-content: space-between; color: #fff; background: repeating-linear-gradient(45deg, #111 0 1px, #262626 1px 2px); }
.recorder span { white-space: nowrap; }
.views { display: flex; margin-left: auto; align-self: stretch; }
.views button { width: 25px; justify-content: center; }
.views .on { background: #c8c8c6; }
.zoom { display: flex; align-items: center; gap: 1px; padding: 0 5px 0 3px; }
.zoom span { margin-left: 6px; }
.zoom input { appearance: none; width: 68px; height: 9px; background: linear-gradient(#999, #999) center / 100% 1px no-repeat; }
.zoom input::-webkit-slider-thumb { appearance: none; width: 3px; height: 8px; background: #555; }

/* taskbar */
.taskbar { flex: none; height: 27px; display: flex; background: #0b1c2a; color: #fff; }
.ico { flex: none; justify-content: center; width: 33px; }
.start { width: 32px; margin-right: 5px; }
.wa { width: 38px; }
.task { flex: 0 1 90px; gap: 4px; padding: 0 4px; margin-right: 5px; border-bottom: 2px solid #83bbe6; overflow: hidden; }
.task:has(+ .ico) { margin-right: 0; }
.folder { gap: 7px; padding-left: 5px; }
.down { gap: 9px; padding-left: 5px; }
.task.active { flex-basis: 94px; background: #0d4f8b; margin: 0 3px 0 -3px; padding-left: 6px; }
.origin { gap: 5px; padding-left: 5px; }
.tray { margin-left: auto; display: flex; align-items: center; gap: 4px; padding-right: 7px; margin-right: 2px; border-right: 1px solid #2c3f4e; }
.tray time { text-align: center; line-height: 12px; margin: 0 6px 0 5px; }
.bell text { font: 8px Roboto, sans-serif; fill: #fff; }
```

FILE: grid.js
```js
const columnA = [null, 75284, 35638, 57375, 43025, 26901, 89689, 80652, 11544, 54115, 16885, 54952,
  81655, 69517, 88612, 94687, 44983, 70884, 76576, 2406, 77601, 29969, 64279, 9296, 47994, 66714,
  49399, 70397, 17865, 4873, 43942, 22891, 29192, 78937, 47157, 73336, 41403, 26442];
const picks = [73, 48, 15, 78, 46];

const columnName = i => (i < 26 ? '' : 'A') + String.fromCharCode(65 + i % 26);
const FIRST_SEL = 13, LAST_SEL = 29, COLUMNS = 43;

function widthClass(i) {
  if (i > 41) return '';
  if (i === LAST_SEL) return 'w23';
  if (i === LAST_SEL + 1) return 'w42';
  if (i >= 3 && i < LAST_SEL) return 'w22';
  return i % 3 === 2 ? 'w42' : 'w43';
}

function cell(row, col) {
  const classes = [];
  let text = '';
  if (col >= FIRST_SEL && col <= LAST_SEL) classes.push('sel');
  if (col === FIRST_SEL && row === 1) classes.push('active');
  if (col === FIRST_SEL - 1) classes.push('edge');
  if (col === LAST_SEL) classes.push('last');
  if (col === 0) { classes.push('num'); text = columnA[row - 1] ?? ''; }
  if (col >= 3 && col <= 7) {
    if (row === 1) { classes.push('head'); text = col - 2; }
    if (row === 2) { classes.push('pick'); text = picks[col - 3]; }
    if (row === 4) text = 1;
  }
  if (col >= 3 && col <= 12 && row >= 13 && row <= 20) text = (row - 13) * 10 + col - 2;
  if (col === 3 && row === 13) {
    classes.push('anchor');
    text += '<svg class="ants" width="221" height="108"><rect x="1" y="1" width="219" height="106" fill="none" stroke="#1e6b41" stroke-width="2" stroke-dasharray="5 2"/></svg>';
  }
  return `<td class="${classes.join(' ')}">${text}</td>`;
}

let html = '<colgroup><col class="w17">';
for (let c = 0; c < COLUMNS; c++) html += `<col class="${widthClass(c)}">`;
html += '</colgroup><thead><tr><th></th>';
for (let c = 0; c < COLUMNS; c++) {
  html += `<th class="${c >= FIRST_SEL && c <= LAST_SEL ? 'sel' : ''}">${c > 41 ? '' : columnName(c)}</th>`;
}
html += '</tr></thead><tbody>';
for (let r = 1; r <= 39; r++) {
  html += `<tr class="${r % 3 === 0 ? 'tall' : ''}"><th>${r > 38 ? '' : r}</th>`;
  for (let c = 0; c < COLUMNS; c++) html += cell(r, c);
  html += '</tr>';
}
document.getElementById('grid').innerHTML = html + '</tbody>';
```
